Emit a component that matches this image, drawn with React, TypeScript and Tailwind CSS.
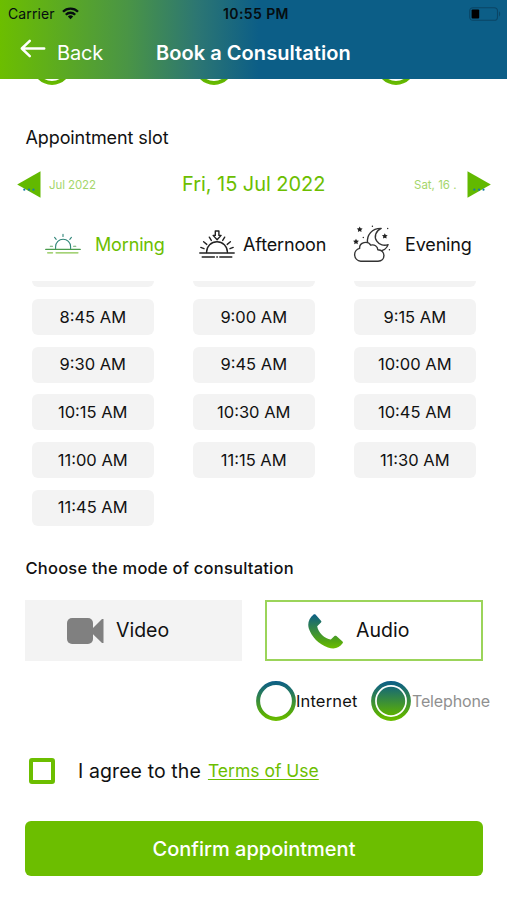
import { useState } from 'react';
import clsx from 'clsx';

const SLOTS = [
  '8:45 AM', '9:00 AM', '9:15 AM',
  '9:30 AM', '9:45 AM', '10:00 AM',
  '10:15 AM', '10:30 AM', '10:45 AM',
  '11:00 AM', '11:15 AM', '11:30 AM',
  '11:45 AM',
];

function WifiIcon() {
  return (
    <svg width="17" height="13" viewBox="0 0 17 13" fill="none" stroke="#050d10" strokeWidth="2.3">
      <path d="M1 4.8a10.6 10.6 0 0 1 15 0" />
      <path d="M3.8 7.7a6.7 6.7 0 0 1 9.4 0" />
      <path d="M8.5 12.3 5.8 9.6a3.9 3.9 0 0 1 5.4 0z" fill="#050d10" stroke="none" />
    </svg>
  );
}

function BatteryIcon() {
  return (
    <svg width="32" height="14" viewBox="0 0 32 14" fill="none">
      <rect x="0.7" y="0.7" width="27.8" height="12.6" rx="3.4" stroke="#0a4565" strokeWidth="1.1" />
      <rect x="2.6" y="2.6" width="7.6" height="8.8" rx="1" fill="#000" />
      <path d="M30 4.6c1.5.6 1.5 4.2 0 4.8z" fill="#0a4565" />
    </svg>
  );
}

function BackArrow() {
  return (
    <svg width="26" height="19" viewBox="0 0 26 19" fill="none" stroke="#fff" strokeWidth="2.5" strokeLinecap="round" strokeLinejoin="round">
      <path d="M24.2 9.5H1.8M9.8 1.8 1.8 9.5l8 7.6" />
    </svg>
  );
}

function MorningIcon() {
  return (
    <svg width="36" height="22" viewBox="0 0 36 22" fill="none" strokeWidth="1.1" strokeLinecap="round">
      <g stroke="#2f8578">
        <path d="M10.6 15.5v-1.8a7.5 7.5 0 0 1 15 0v1.8" />
        <path d="M18 1.3v2.2M9.6 4.4l1.6 2M26.4 4.4l-1.6 2" />
      </g>
      <path d="M5.3 13.2h2.2M28.6 13.2h2.2" stroke="#68a96a" />
      <path d="M.8 16.4h34.4" stroke="#4a9b4c" strokeWidth="1.4" />
      <path d="M2.6 19.8h5M11 19.8h22" stroke="#87c44b" strokeWidth="1.2" />
    </svg>
  );
}

function AfternoonIcon() {
  return (
    <svg width="36" height="29" viewBox="0 0 36 29" fill="none" stroke="#222" strokeWidth="1.4" strokeLinecap="round" strokeLinejoin="round">
      <path d="M16.3 1h3.6v4.4h2.2l-4 4.4-4-4.4h2.2z" />
      <path d="M7.6 22.6v-.5a10.4 10.4 0 0 1 20.8 0v.5" />
      <path d="M10.3 7.2l2 3.2M25.7 7.2l-2 3.2M4.6 11.8l3.2 2.6M31.4 11.8l-3.2 2.6M1.8 17.4l3.2 1.3M34.2 17.4 31 18.7" />
      <path d="M.8 23h34.4" />
      <path d="M3.2 27h12.2M17.8 27h.6M20.8 27h12" />
    </svg>
  );
}

function EveningIcon() {
  return (
    <svg width="38" height="38" viewBox="0 0 38 38" fill="none" stroke="#333" strokeWidth="1.4" strokeLinejoin="round">
      <path d="M14.5 18.1C13.5 10 19 3.2 28.2 3.4 22.6 6 20.7 11.8 23.8 16.2c2.5 3.8 7.3 5 11.3 3.4-1.4 4.2-4.6 6-8.9 6.5" />
      <path d="M7.7 36.2a6.5 6.5 0 0 1-1.1-12.8c-.3-6.2 8.2-8 11.1-3.2 3.6-1.1 7 1 7.1 4.5 8.3.4 8 11.5.2 11.5z" fill="#fff" />
      <g fill="#222" stroke="none">
        <path d="m6.7 1.5.9 1.7 2 .3-1.4 1.4.3 2-1.8-.9-1.8.9.3-2-1.4-1.4 2-.3z" />
        <path d="m3 13.8.9 1.7 2 .3-1.4 1.4.3 2-1.8-.9-1.8.9.3-2L.1 15.8l2-.3z" />
        <path d="m31.8 8.2.9 1.7 2 .3-1.4 1.4.3 2-1.8-.9-1.8.9.3-2-1.4-1.4 2-.3z" />
        <circle cx="19.4" cy="1.2" r=".7" />
        <circle cx="34.7" cy="3.5" r=".7" />
        <circle cx="10.3" cy="12.5" r=".7" />
        <circle cx="36.4" cy="24.7" r=".7" />
      </g>
    </svg>
  );
}

function VideoIcon() {
  return (
    <svg width="37" height="26" viewBox="0 0 37 26" fill="#808080">
      <rect width="26" height="26" rx="5" />
      <path d="M25.5 10.5 35 .9h1.5v24.2H35l-9.500-9.300z" />
    </svg>
  );
}

function PhoneIcon() {
  return (
    <svg width="35" height="35" viewBox="0 0 35 35">
      <defs>
        <linearGradient id="phone" x1="0" y1="0" x2="0" y2="1">
          <stop offset="0" stopColor="#0c5e87" />
          <stop offset="0.8" stopColor="#55a811" />
          <stop offset="1" stopColor="#6cbe00" />
        </linearGradient>
      </defs>
      <path
        fill="url(#phone)"
        d="M5.600.5c.6-.5 1.400-.4 1.900.1l5.500 6.100c.6.600.5 1.300 0 1.900L9.200 12.300c.7 5.900 7.700 12.700 13.600 13.300l3.700-3.500c.6-.5 1.300-.5 1.900 0l6.100 5.300c.6.500.6 1.300.1 1.900-3.500 4.900-8.400 6.300-14.700 4.100C10.700 30.200 3.600 22.600.8 14.400-.7 9.200.9 4.300 5.600.5z"
      />
    </svg>
  );
}

function Radio({ id, checked }: { id: string; checked?: boolean }) {
  return (
    <svg className="shrink-0" width="40" height="40" viewBox="0 0 40 40" fill="none">
      <defs>
        <linearGradient id={id} gradientUnits="userSpaceOnUse" x1="0" y1="0" x2="0" y2="40">
          <stop offset="0" stopColor="#0c5e87" />
          <stop offset="0.15" stopColor="#176a75" />
          <stop offset="0.85" stopColor="#5bb002" />
          <stop offset="1" stopColor="#6cbe00" />
        </linearGradient>
      </defs>
      <circle cx="20" cy="20" r="17.9" stroke={`url(#${id})`} strokeWidth="4" />
      {checked && <circle cx="20" cy="20" r="14.2" fill={`url(#${id})`} />}
    </svg>
  );
}

function DayArrow({ next }: { next?: boolean }) {
  return (
    <svg className="shrink-0" width="24" height="27" viewBox="0 0 24 27">
      <path d={next ? 'M.5.3v26.400L23.800 13.500z' : 'M23.500.3v26.400L.2 13.500z'} fill="#62b900" />
      <g fill="#187ba5">
        <circle cx="7.300" cy="18.700" r="1.100" />
        <circle cx="12" cy="18.700" r="1.100" />
        <circle cx="16.500" cy="18.700" r="1.100" />
      </g>
    </svg>
  );
}

export default function App() {
  const [mode, setMode] = useState<'video' | 'audio'>('audio');
  const [agreed, setAgreed] = useState(false);

  return (
    <div className="h-[900px] w-[507px] overflow-hidden bg-white font-['Inter',sans-serif] text-[#111]">
      {/* Status bar + nav */}
      <header className="h-[79px] bg-[linear-gradient(90deg,#6cbe00_0%,#4a9545_25%,#2c7673_39%,#0c5e87_51%)]">
        <div className="grid h-[27px] grid-cols-3 items-center pr-[6px] pl-[8px] text-[14px] text-[#050d10]">
          <div className="flex items-center gap-[7px]">
            <span className="tracking-[0.1px]">Carrier</span>
            <WifiIcon />
          </div>
          <span className="pl-[3px] text-center font-semibold tracking-[0.4px]">10:55 PM</span>
          <div className="flex justify-end">
            <BatteryIcon />
          </div>
        </div>
        <div className="flex h-[52px] items-center text-white">
          <div className="flex w-[156px] items-center gap-[11px] pl-[20px]">
            <div className="-mt-[10px]"><BackArrow /></div>
            <span className="text-[20px] tracking-[-0.2px]">Back</span>
          </div>
          <h1 className="text-[20px] font-semibold tracking-[0.05px] whitespace-nowrap">Book a Consultation</h1>
        </div>
      </header>

      {/* Bottom edge of the scrolled options */}
      <div className="flex h-[6px] items-end overflow-hidden pl-[32px]">
        <div className="mr-[122px]"><Radio id="o1" /></div>
        <div className="mr-[142px]"><Radio id="o2" /></div>
        <Radio id="o3" />
      </div>

      <h2 className="mt-[41px] ml-[25.500px] h-[24px] text-[18px] leading-[24px] tracking-[-0.1px]">Appointment slot</h2>

      {/* Day picker */}
      <div className="mt-[18px] flex h-[32px] items-center pr-[16px] pl-[17px] text-[#6cbe00]">
        <DayArrow />
        <span className="mt-[3px] ml-[8px] w-[133px] text-[11.500px] tracking-[-0.1px] text-[#a5d66b]">Jul 2022</span>
        <span className="w-[232px] text-[20px] tracking-[-0.050px] whitespace-nowrap">Fri, 15 Jul 2022</span>
        <span className="mt-[3px] w-[53px] text-[11.500px] whitespace-nowrap text-[#a5d66b]">Sat, 16 .</span>
        <DayArrow next />
      </div>

      {/* Part of day */}
      <div className="mt-[20px] flex h-[48px] items-center text-[18px] tracking-[-0.150px]">
        <div className="flex w-[199px] items-center pl-[45px] text-[#6cbe00]">
          <MorningIcon />
          <span className="ml-[14px]">Morning</span>
        </div>
        <div className="flex w-[154px] items-center">
          <AfternoonIcon />
          <span className="ml-[8px]">Afternoon</span>
        </div>
        <div className="flex items-center">
          <EveningIcon />
          <span className="ml-[14px]">Evening</span>
        </div>
      </div>

      {/* Slots */}
      <div className="mt-[13px] h-[253px] overflow-hidden pl-[31.500px]">
        <div className="mb-[12px] grid grid-cols-[repeat(3,122.500px)] gap-x-[38.500px]">
          {[0, 1, 2].map((i) => (
            <div key={i} className="h-[6px] rounded-b-[6px] bg-[#f3f3f3]" />
          ))}
        </div>
        <div className="grid grid-cols-[repeat(3,122.500px)] gap-x-[38.500px] gap-y-[11.700px]">
          {SLOTS.map((slot) => (
            <button key={slot} className="h-[36px] rounded-[6px] bg-[#f3f3f3] text-[16.500px]">
              {slot}
            </button>
          ))}
        </div>
      </div>

      <h2 className="mt-[22px] ml-[25.500px] h-[24px] text-[16.500px] leading-[24px] font-medium tracking-[0.220px]">Choose the mode of consultation</h2>

      {/* Mode */}
      <div className="mt-[20px] flex gap-[23px] pl-[25px] text-[19.500px]">
        <button
          onClick={() => setMode('video')}
          className={clsx('flex h-[61px] w-[217px] items-center border-2 pt-[1px] pl-[40px]', mode === 'video' ? 'border-[#9bd45a] bg-white' : 'border-[#f3f3f3] bg-[#f3f3f3]')}
        >
          <VideoIcon />
          <span className="ml-[12px]">Video</span>
        </button>
        <button
          onClick={() => setMode('audio')}
          className={clsx('flex h-[61px] w-[218px] items-center border-2 pt-[1px] pl-[41px]', mode === 'audio' ? 'border-[#9bd45a] bg-white' : 'border-[#f3f3f3] bg-[#f3f3f3]')}
        >
          <PhoneIcon />
          <span className="ml-[13px]">Audio</span>
        </button>
      </div>
      <div className="mt-[20px] flex h-[40px] items-center pl-[256px] text-[16.500px]">
        <Radio id="internet" />
        <span className="w-[75px] tracking-[0.150px]">Internet</span>
        <Radio id="telephone" checked />
        <span className="ml-[1px] text-[16px] tracking-[-0.150px] text-[#909090]">Telephone</span>
      </div>

      {/* Terms */}
      <div className="mt-[36px] flex h-[28px] items-center pl-[29px]">
        <button
          aria-label="Agree"
          onClick={() => setAgreed(!agreed)}
          className={clsx('size-[26px] rounded-[3px] border-4 border-[#6cbe00]', agreed && 'bg-[#6cbe00]')}
        />
        <span className="mt-[2px] ml-[23px] text-[19.500px] tracking-[0.1px] whitespace-nowrap">I agree to the</span>
        <a className="mt-[1px] ml-[7px] text-[17.500px] whitespace-nowrap text-[#6cbe00] underline underline-offset-2">Terms of Use</a>
      </div>

      <button className="mt-[36px] ml-[25px] h-[55px] w-[458px] rounded-[6px] bg-[#6cbe00] pt-[1px] text-[20px] font-medium text-white">
        Confirm appointment
      </button>
    </div>
  );
}
